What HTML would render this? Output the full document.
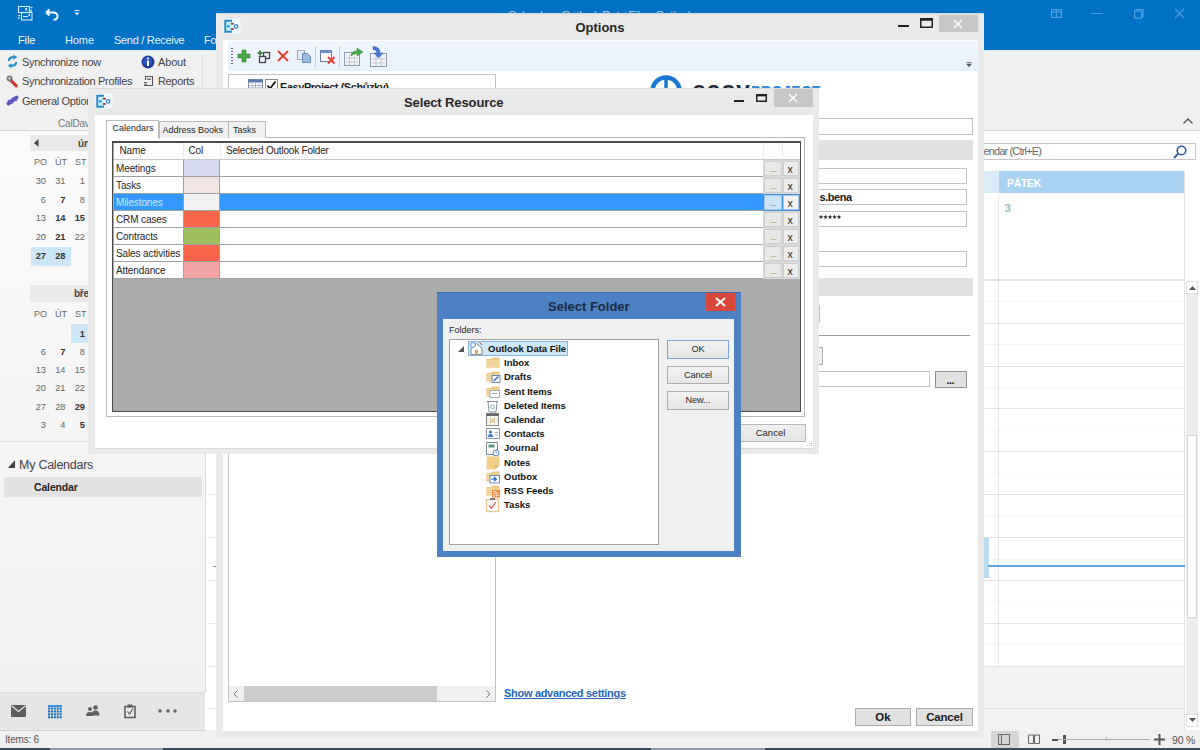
<!DOCTYPE html>
<html><head><meta charset="utf-8">
<style>
*{box-sizing:border-box;margin:0;padding:0}
html,body{width:1200px;height:750px;overflow:hidden;background:#fff;font-family:"Liberation Sans",sans-serif;color:#262626}
.a{position:absolute}
.t{position:absolute;white-space:nowrap;line-height:1}
svg{overflow:visible}
</style></head><body>
<div class="a" style="left:0px;top:0px;width:1200px;height:50px;background:#0072c6"></div>
<svg class="a" style="left:18px;top:6px;" width="15" height="15" viewBox="0 0 15 15"><g fill="none" stroke="#d8ecfa" stroke-width="1.1"><rect x="0.5" y="0.5" width="11" height="6"/><rect x="3.5" y="6.5" width="10.5" height="7.5"/><line x1="5" y1="10.5" x2="10" y2="10.5"/></g><rect x="7.5" y="2" width="1.6" height="2.5" fill="#e8f4fc"/><rect x="12.5" y="1" width="2" height="1.2" fill="#d8ecfa"/><rect x="12.5" y="3.5" width="1.2" height="2.5" fill="#d8ecfa"/><rect x="10.5" y="8" width="1.5" height="2" fill="#e8f4fc"/><rect x="0" y="9" width="2" height="1.2" fill="#d8ecfa"/><rect x="0" y="11.5" width="1.5" height="1.5" fill="#d8ecfa"/></svg>
<svg class="a" style="left:45px;top:8px;" width="14" height="13" viewBox="0 0 14 13"><path d="M1 4.5 L4.5 1.5 M1 4.5 L4.5 7.5 M1 4.5 H8 Q12.5 4.5 12.5 8.2 Q12.5 11.5 8.5 11.8" fill="none" stroke="#f4f8fc" stroke-width="2"/></svg>
<svg class="a" style="left:74px;top:10px;" width="6" height="6" viewBox="0 0 6 6"><rect x="0.5" y="0" width="5" height="1" fill="#d6e7f6"/><path d="M0.5 2.5 H5.5 L3 5.5 Z" fill="#d6e7f6"/></svg>
<div class="t" style="left:18px;top:34.89px;font-size:11px;font-weight:400;color:#ffffff;letter-spacing:-0.1px;">File</div>
<div class="t" style="left:65px;top:34.89px;font-size:11px;font-weight:400;color:#e8f1fa;letter-spacing:-0.1px;">Home</div>
<div class="t" style="left:114px;top:34.89px;font-size:11px;font-weight:400;color:#e8f1fa;letter-spacing:-0.3px;">Send / Receive</div>
<div class="t" style="left:204px;top:34.89px;font-size:11px;font-weight:400;color:#e8f1fa;letter-spacing:-0.1px;">Fo</div>
<div class="t" style="left:508px;top:9.69px;font-size:11px;font-weight:400;color:#b9d5ee;letter-spacing:-0.05px;">Calendar - Outlook Data File - Outlook</div>
<svg class="a" style="left:1051px;top:9px;" width="11" height="9" viewBox="0 0 11 9"><g fill="none" stroke="#4a9ee4" stroke-width="1.2"><rect x="0.6" y="0.6" width="9.8" height="7.8"/><line x1="5.5" y1="1" x2="5.5" y2="8"/><line x1="1" y1="3" x2="10" y2="3"/></g></svg>
<div class="a" style="left:1091px;top:13px;width:12px;height:1px;background:#4a9ee4"></div>
<svg class="a" style="left:1134px;top:9px;" width="10" height="10" viewBox="0 0 10 10"><g fill="none" stroke="#4a9ee4" stroke-width="1.2"><rect x="0.6" y="2.1" width="7" height="7"/><path d="M2.1 2.1 V0.6 H9.1 V7.6 H7.6"/></g></svg>
<svg class="a" style="left:1175px;top:9px;" width="9" height="9" viewBox="0 0 9 9"><g stroke="#4a9ee4" stroke-width="1.1"><line x1="0" y1="0" x2="9" y2="9"/><line x1="9" y1="0" x2="0" y2="9"/></g></svg>
<div class="a" style="left:0px;top:50px;width:1200px;height:81px;background:#f0f0f0"></div>
<div class="a" style="left:0px;top:50px;width:1200px;height:1px;background:#dcecf8"></div>
<div class="a" style="left:0px;top:130px;width:1200px;height:1px;background:#d5d5d5"></div>
<div class="a" style="left:202px;top:54px;width:1px;height:72px;background:#dadada"></div>
<svg class="a" style="left:7px;top:55px;" width="11" height="13" viewBox="0 0 11 13"><path d="M1.8 6 Q2 2.2 6.8 2.2" fill="none" stroke="#2a92c8" stroke-width="2.3"/><path d="M6.3 -0.3 L10.3 2.2 L6.3 4.8 Z" fill="#2a92c8"/><path d="M9.2 7 Q9 10.8 4.2 10.8" fill="none" stroke="#2a92c8" stroke-width="2.3"/><path d="M4.7 8.2 L0.7 10.8 L4.7 13.3 Z" fill="#2a92c8"/></svg>
<div class="t" style="left:22px;top:57.19px;font-size:11px;font-weight:400;color:#444;letter-spacing:-0.33px;">Synchronize now</div>
<svg class="a" style="left:6px;top:75px;" width="12" height="13" viewBox="0 0 12 13"><line x1="4.5" y1="5" x2="10.3" y2="10.8" stroke="#c8403a" stroke-width="3.2" stroke-linecap="round"/><circle cx="3.6" cy="3.6" r="3" fill="#7a7a7a"/><circle cx="3.4" cy="3.4" r="1.1" fill="#e8e8e8"/></svg>
<div class="t" style="left:22px;top:76.49px;font-size:11px;font-weight:400;color:#444;letter-spacing:-0.33px;">Synchronization Profiles</div>
<svg class="a" style="left:6px;top:95px;" width="13" height="11" viewBox="0 0 13 11"><line x1="2.5" y1="8.5" x2="10.5" y2="2.5" stroke="#5a50c0" stroke-width="4" stroke-linecap="round"/><circle cx="3" cy="6" r="1.3" fill="#6a60d0"/><circle cx="6" cy="7.5" r="1.3" fill="#6a60d0"/><circle cx="7" cy="3.5" r="1.3" fill="#6a60d0"/><circle cx="10" cy="5" r="1.3" fill="#6a60d0"/></svg>
<div class="t" style="left:22px;top:95.59px;font-size:11px;font-weight:400;color:#444;letter-spacing:-0.33px;">General Options</div>
<svg class="a" style="left:141px;top:55px;" width="14" height="14" viewBox="0 0 14 14"><circle cx="7" cy="7" r="6.5" fill="#1e3c9c"/><circle cx="6.5" cy="6" r="4.5" fill="#2c52c0"/><rect x="6" y="5.5" width="2" height="5.5" fill="#fff"/><circle cx="7" cy="3.5" r="1.1" fill="#fff"/></svg>
<div class="t" style="left:158px;top:57.19px;font-size:11px;font-weight:400;color:#444;letter-spacing:-0.15px;">About</div>
<svg class="a" style="left:144px;top:76px;" width="10" height="11" viewBox="0 0 10 11"><path d="M1.5 4 V0.5 H8.5 V9.5 H3" fill="none" stroke="#555" stroke-width="1.1"/><rect x="3" y="2.5" width="4" height="1.3" fill="#555"/><rect x="0" y="6" width="3" height="1.2" fill="#555"/><rect x="0" y="8.3" width="3" height="1.6" fill="#555"/></svg>
<div class="t" style="left:158px;top:76.49px;font-size:11px;font-weight:400;color:#444;letter-spacing:-0.35px;">Reports</div>
<div class="t" style="left:58px;top:118.53px;font-size:10px;font-weight:400;color:#777;letter-spacing:-0.2px;">CalDav</div>
<div class="a" style="left:0px;top:131px;width:205px;height:561px;background:linear-gradient(#fbfbfb,#f6f6f6 40%,#f0f0f0)"></div>
<div class="a" style="left:205px;top:131px;width:11px;height:599px;background:#ffffff"></div>
<div class="a" style="left:205px;top:131px;width:1px;height:561px;background:#dddddd"></div>
<div class="a" style="left:209px;top:280px;width:7px;height:1px;background:#e6e6e6"></div>
<div class="a" style="left:209px;top:323px;width:7px;height:1px;background:#e6e6e6"></div>
<div class="a" style="left:209px;top:366px;width:7px;height:1px;background:#e6e6e6"></div>
<div class="a" style="left:209px;top:408px;width:7px;height:1px;background:#e6e6e6"></div>
<div class="a" style="left:209px;top:451px;width:7px;height:1px;background:#e6e6e6"></div>
<div class="a" style="left:209px;top:494px;width:7px;height:1px;background:#e6e6e6"></div>
<div class="a" style="left:209px;top:537px;width:7px;height:1px;background:#e6e6e6"></div>
<div class="a" style="left:209px;top:580px;width:7px;height:1px;background:#e6e6e6"></div>
<div class="a" style="left:209px;top:623px;width:7px;height:1px;background:#e6e6e6"></div>
<div class="a" style="left:209px;top:666px;width:7px;height:1px;background:#e6e6e6"></div>
<div class="a" style="left:209px;top:708px;width:7px;height:1px;background:#e6e6e6"></div>
<div class="a" style="left:213px;top:566px;width:3px;height:1px;background:#5a9bd8"></div>
<div class="a" style="left:30px;top:135px;width:58px;height:16px;background:#e9e9e9"></div>
<svg class="a" style="left:34px;top:139px;" width="5" height="8" viewBox="0 0 5 8"><path d="M4.5 0 V8 L0 4 Z" fill="#444"/></svg>
<div class="t" style="left:78px;top:138.53px;font-size:10px;font-weight:700;color:#444;letter-spacing:-0.2px;">ún</div>
<div class="t" style="left:34px;top:158.38px;font-size:9px;font-weight:400;color:#666;letter-spacing:-0.1px;">PO</div>
<div class="t" style="left:55px;top:158.38px;font-size:9px;font-weight:400;color:#666;letter-spacing:-0.1px;">ÚT</div>
<div class="t" style="left:75px;top:158.38px;font-size:9px;font-weight:400;color:#666;letter-spacing:-0.1px;">ST</div>
<div class="a" style="left:31px;top:247px;width:40px;height:19px;background:#cde6f7"></div>
<div class="t" style="right:1154px;top:177.33px;font-size:9.3px;font-weight:400;color:#666;letter-spacing:0px;text-align:right;">30</div>
<div class="t" style="right:1134.5px;top:177.33px;font-size:9.3px;font-weight:400;color:#666;letter-spacing:0px;text-align:right;">31</div>
<div class="t" style="right:1115px;top:177.33px;font-size:9.3px;font-weight:400;color:#666;letter-spacing:0px;text-align:right;">1</div>
<div class="t" style="right:1154px;top:195.73px;font-size:9.3px;font-weight:400;color:#666;letter-spacing:0px;text-align:right;">6</div>
<div class="t" style="right:1134.5px;top:195.73px;font-size:9.3px;font-weight:700;color:#333;letter-spacing:0px;text-align:right;">7</div>
<div class="t" style="right:1115px;top:195.73px;font-size:9.3px;font-weight:400;color:#666;letter-spacing:0px;text-align:right;">8</div>
<div class="t" style="right:1154px;top:214.13px;font-size:9.3px;font-weight:400;color:#666;letter-spacing:0px;text-align:right;">13</div>
<div class="t" style="right:1134.5px;top:214.13px;font-size:9.3px;font-weight:700;color:#333;letter-spacing:0px;text-align:right;">14</div>
<div class="t" style="right:1115px;top:214.13px;font-size:9.3px;font-weight:700;color:#333;letter-spacing:0px;text-align:right;">15</div>
<div class="t" style="right:1154px;top:232.53px;font-size:9.3px;font-weight:400;color:#666;letter-spacing:0px;text-align:right;">20</div>
<div class="t" style="right:1134.5px;top:232.53px;font-size:9.3px;font-weight:700;color:#333;letter-spacing:0px;text-align:right;">21</div>
<div class="t" style="right:1115px;top:232.53px;font-size:9.3px;font-weight:400;color:#666;letter-spacing:0px;text-align:right;">22</div>
<div class="t" style="right:1154px;top:251.73px;font-size:9.3px;font-weight:700;color:#333;letter-spacing:0px;text-align:right;">27</div>
<div class="t" style="right:1134.5px;top:251.73px;font-size:9.3px;font-weight:700;color:#333;letter-spacing:0px;text-align:right;">28</div>
<div class="a" style="left:30px;top:285px;width:58px;height:17px;background:#e9e9e9"></div>
<div class="t" style="left:74px;top:289.04px;font-size:10px;font-weight:700;color:#444;letter-spacing:-0.3px;">bře</div>
<div class="t" style="left:34px;top:309.98px;font-size:9px;font-weight:400;color:#666;letter-spacing:-0.1px;">PO</div>
<div class="t" style="left:55px;top:309.98px;font-size:9px;font-weight:400;color:#666;letter-spacing:-0.1px;">ÚT</div>
<div class="t" style="left:75px;top:309.98px;font-size:9px;font-weight:400;color:#666;letter-spacing:-0.1px;">ST</div>
<div class="a" style="left:71px;top:324px;width:17px;height:19px;background:#cde6f7"></div>
<div class="t" style="right:1115px;top:329.53px;font-size:9.3px;font-weight:700;color:#333;letter-spacing:0px;text-align:right;">1</div>
<div class="t" style="right:1154px;top:347.63px;font-size:9.3px;font-weight:400;color:#666;letter-spacing:0px;text-align:right;">6</div>
<div class="t" style="right:1134.5px;top:347.63px;font-size:9.3px;font-weight:700;color:#333;letter-spacing:0px;text-align:right;">7</div>
<div class="t" style="right:1115px;top:347.63px;font-size:9.3px;font-weight:400;color:#666;letter-spacing:0px;text-align:right;">8</div>
<div class="t" style="right:1154px;top:365.73px;font-size:9.3px;font-weight:400;color:#666;letter-spacing:0px;text-align:right;">13</div>
<div class="t" style="right:1134.5px;top:365.73px;font-size:9.3px;font-weight:400;color:#666;letter-spacing:0px;text-align:right;">14</div>
<div class="t" style="right:1115px;top:365.73px;font-size:9.3px;font-weight:400;color:#666;letter-spacing:0px;text-align:right;">15</div>
<div class="t" style="right:1154px;top:384.13px;font-size:9.3px;font-weight:400;color:#666;letter-spacing:0px;text-align:right;">20</div>
<div class="t" style="right:1134.5px;top:384.13px;font-size:9.3px;font-weight:400;color:#666;letter-spacing:0px;text-align:right;">21</div>
<div class="t" style="right:1115px;top:384.13px;font-size:9.3px;font-weight:400;color:#666;letter-spacing:0px;text-align:right;">22</div>
<div class="t" style="right:1154px;top:403.13px;font-size:9.3px;font-weight:400;color:#666;letter-spacing:0px;text-align:right;">27</div>
<div class="t" style="right:1134.5px;top:403.13px;font-size:9.3px;font-weight:400;color:#666;letter-spacing:0px;text-align:right;">28</div>
<div class="t" style="right:1115px;top:403.13px;font-size:9.3px;font-weight:700;color:#333;letter-spacing:0px;text-align:right;">29</div>
<div class="t" style="right:1154px;top:421.33px;font-size:9.3px;font-weight:400;color:#666;letter-spacing:0px;text-align:right;">3</div>
<div class="t" style="right:1134.5px;top:421.33px;font-size:9.3px;font-weight:400;color:#666;letter-spacing:0px;text-align:right;">4</div>
<div class="t" style="right:1115px;top:421.33px;font-size:9.3px;font-weight:700;color:#333;letter-spacing:0px;text-align:right;">5</div>
<div class="a" style="left:0px;top:441px;width:88px;height:1px;background:#dcdcdc"></div>
<svg class="a" style="left:8px;top:460px;" width="7" height="8" viewBox="0 0 7 8"><path d="M7 0 V8 H0 Z" fill="#444"/></svg>
<div class="t" style="left:19px;top:459.42px;font-size:12.5px;font-weight:400;color:#444;letter-spacing:-0.25px;">My Calendars</div>
<div class="a" style="left:4px;top:477px;width:198px;height:20px;background:#e2e2e2"></div>
<div class="t" style="left:34px;top:482.11px;font-size:10.5px;font-weight:700;color:#262626;letter-spacing:-0.15px;">Calendar</div>
<div class="a" style="left:0px;top:692px;width:205px;height:38px;background:#e6e6e6"></div>
<div class="a" style="left:0px;top:692px;width:205px;height:1px;background:#dadada"></div>
<svg class="a" style="left:11px;top:705px;" width="15" height="12" viewBox="0 0 15 12"><rect x="0" y="0" width="15" height="12" fill="#5f5f5f"/><path d="M0.5 0.8 L7.5 6.5 L14.5 0.8" fill="none" stroke="#e6e6e6" stroke-width="1.3"/></svg>
<svg class="a" style="left:48px;top:705px;" width="15" height="14" viewBox="0 0 15 14"><rect x="0" y="0" width="14" height="2" fill="#3a8ee0"/><rect x="0.0" y="2.5" width="2.1" height="2.1" fill="#1f6bb8"/><rect x="2.9" y="2.5" width="2.1" height="2.1" fill="#1f6bb8"/><rect x="5.8" y="2.5" width="2.1" height="2.1" fill="#1f6bb8"/><rect x="8.7" y="2.5" width="2.1" height="2.1" fill="#1f6bb8"/><rect x="11.6" y="2.5" width="2.1" height="2.1" fill="#1f6bb8"/><rect x="0.0" y="5.4" width="2.1" height="2.1" fill="#1f6bb8"/><rect x="2.9" y="5.4" width="2.1" height="2.1" fill="#1f6bb8"/><rect x="5.8" y="5.4" width="2.1" height="2.1" fill="#1f6bb8"/><rect x="8.7" y="5.4" width="2.1" height="2.1" fill="#1f6bb8"/><rect x="11.6" y="5.4" width="2.1" height="2.1" fill="#1f6bb8"/><rect x="0.0" y="8.3" width="2.1" height="2.1" fill="#1f6bb8"/><rect x="2.9" y="8.3" width="2.1" height="2.1" fill="#1f6bb8"/><rect x="5.8" y="8.3" width="2.1" height="2.1" fill="#1f6bb8"/><rect x="8.7" y="8.3" width="2.1" height="2.1" fill="#1f6bb8"/><rect x="11.6" y="8.3" width="2.1" height="2.1" fill="#1f6bb8"/><rect x="0.0" y="11.2" width="2.1" height="2.1" fill="#1f6bb8"/><rect x="2.9" y="11.2" width="2.1" height="2.1" fill="#1f6bb8"/><rect x="5.8" y="11.2" width="2.1" height="2.1" fill="#1f6bb8"/><rect x="8.7" y="11.2" width="2.1" height="2.1" fill="#1f6bb8"/><rect x="11.6" y="11.2" width="2.1" height="2.1" fill="#1f6bb8"/></svg>
<svg class="a" style="left:86px;top:705px;" width="14" height="11" viewBox="0 0 14 11"><circle cx="9.5" cy="2.5" r="2.3" fill="#5f5f5f"/><path d="M5.5 10.5 Q5.5 5.5 9.5 5.5 Q13.5 5.5 13.5 10.5 Z" fill="#5f5f5f"/><circle cx="4" cy="4" r="2" fill="#5f5f5f"/><path d="M0 11 Q0 7 4 7 Q7 7 7 11 Z" fill="#5f5f5f"/></svg>
<svg class="a" style="left:124px;top:704px;" width="12" height="14" viewBox="0 0 12 14"><path d="M1 2.5 H11 V13.5 H1 Z" fill="none" stroke="#5f5f5f" stroke-width="1.6"/><rect x="3.5" y="0.5" width="5" height="3" fill="#5f5f5f"/><path d="M3.5 7.5 L5.5 10 L9 4.5" fill="none" stroke="#5f5f5f" stroke-width="1.2"/></svg>
<svg class="a" style="left:158px;top:709px;" width="4" height="4" viewBox="0 0 4 4"><circle cx="2" cy="2" r="1.8" fill="#666"/></svg>
<svg class="a" style="left:165.5px;top:709px;" width="4" height="4" viewBox="0 0 4 4"><circle cx="2" cy="2" r="1.8" fill="#666"/></svg>
<svg class="a" style="left:173px;top:709px;" width="4" height="4" viewBox="0 0 4 4"><circle cx="2" cy="2" r="1.8" fill="#666"/></svg>
<div class="a" style="left:0px;top:730px;width:1200px;height:18px;background:#f0f0f0"></div>
<div class="a" style="left:0px;top:730px;width:205px;height:1px;background:#d0d0d0"></div>
<div class="t" style="left:5px;top:734.53px;font-size:10px;font-weight:400;color:#555;letter-spacing:-0.2px;">Items: 6</div>
<div class="a" style="left:0px;top:748px;width:1200px;height:2px;background:#3c4b5f"></div>
<div class="a" style="left:50px;top:748px;width:113px;height:2px;background:#8f9aa8"></div>
<div class="a" style="left:651px;top:748px;width:114px;height:2px;background:#8f9aa8"></div>
<svg class="a" style="left:1183px;top:118px;" width="10" height="6" viewBox="0 0 10 6"><path d="M0.5 5.5 L5 1 L9.5 5.5" fill="none" stroke="#555" stroke-width="1.3"/></svg>
<div class="a" style="left:900px;top:143px;width:296px;height:17px;background:#fff;border:1px solid #c6c6c6"></div>
<div class="t" style="right:159px;top:146.16px;font-size:10.8px;font-weight:400;color:#666;letter-spacing:-0.75px;text-align:right;">Search Calendar (Ctrl+E)</div>
<svg class="a" style="left:1173px;top:145px;" width="14" height="14" viewBox="0 0 14 14"><circle cx="8.5" cy="5.5" r="4.3" fill="none" stroke="#2b5797" stroke-width="1.6"/><line x1="5.3" y1="8.7" x2="1" y2="13" stroke="#2b5797" stroke-width="1.8"/></svg>
<div class="a" style="left:983px;top:171px;width:16px;height:22px;background:#dcedfa"></div>
<div class="a" style="left:999px;top:171px;width:186px;height:22px;background:#a9d1f2"></div>
<div class="t" style="left:1007px;top:178.11px;font-size:10.5px;font-weight:700;color:#ffffff;letter-spacing:-0.3px;">PÁTEK</div>
<div class="t" style="left:1004.5px;top:203.07px;font-size:11.5px;font-weight:700;color:#9db8ca;letter-spacing:0px;">3</div>
<div class="a" style="left:998px;top:193px;width:1px;height:537px;background:#e8e8e8"></div>
<div class="a" style="left:1184px;top:171px;width:1px;height:559px;background:#e3e3e3"></div>
<div class="a" style="left:983px;top:666px;width:201px;height:64px;background:#f2f2f2"></div>
<div class="a" style="left:983px;top:279px;width:201px;height:2px;background:#e1e1e1"></div>
<div class="a" style="left:983px;top:323px;width:201px;height:1px;background:#e1e1e1"></div>
<div class="a" style="left:983px;top:366px;width:201px;height:1px;background:#e1e1e1"></div>
<div class="a" style="left:983px;top:408px;width:201px;height:1px;background:#e1e1e1"></div>
<div class="a" style="left:983px;top:451px;width:201px;height:1px;background:#e1e1e1"></div>
<div class="a" style="left:983px;top:494px;width:201px;height:1px;background:#e1e1e1"></div>
<div class="a" style="left:983px;top:537px;width:201px;height:1px;background:#e1e1e1"></div>
<div class="a" style="left:983px;top:580px;width:201px;height:1px;background:#e1e1e1"></div>
<div class="a" style="left:983px;top:623px;width:201px;height:1px;background:#e1e1e1"></div>
<div class="a" style="left:983px;top:666px;width:201px;height:1px;background:#e1e1e1"></div>
<div class="a" style="left:983px;top:708px;width:201px;height:1px;background:#e1e1e1"></div>
<div class="a" style="left:983px;top:301px;width:201px;height:1px;background:repeating-linear-gradient(90deg,#ececec 0 1px,transparent 1px 2px)"></div>
<div class="a" style="left:983px;top:344px;width:201px;height:1px;background:repeating-linear-gradient(90deg,#ececec 0 1px,transparent 1px 2px)"></div>
<div class="a" style="left:983px;top:387px;width:201px;height:1px;background:repeating-linear-gradient(90deg,#ececec 0 1px,transparent 1px 2px)"></div>
<div class="a" style="left:983px;top:430px;width:201px;height:1px;background:repeating-linear-gradient(90deg,#ececec 0 1px,transparent 1px 2px)"></div>
<div class="a" style="left:983px;top:473px;width:201px;height:1px;background:repeating-linear-gradient(90deg,#ececec 0 1px,transparent 1px 2px)"></div>
<div class="a" style="left:983px;top:516px;width:201px;height:1px;background:repeating-linear-gradient(90deg,#ececec 0 1px,transparent 1px 2px)"></div>
<div class="a" style="left:983px;top:559px;width:201px;height:1px;background:repeating-linear-gradient(90deg,#ececec 0 1px,transparent 1px 2px)"></div>
<div class="a" style="left:983px;top:601px;width:201px;height:1px;background:repeating-linear-gradient(90deg,#ececec 0 1px,transparent 1px 2px)"></div>
<div class="a" style="left:983px;top:644px;width:201px;height:1px;background:repeating-linear-gradient(90deg,#ececec 0 1px,transparent 1px 2px)"></div>
<div class="a" style="left:983px;top:687px;width:201px;height:1px;background:repeating-linear-gradient(90deg,#ececec 0 1px,transparent 1px 2px)"></div>
<div class="a" style="left:984px;top:538px;width:5px;height:40px;background:#bcdcf4"></div>
<div class="a" style="left:988px;top:565px;width:197px;height:2px;background:#62a6dc"></div>
<div class="a" style="left:1186px;top:281px;width:12px;height:446px;background:#ececec"></div>
<div class="a" style="left:1186px;top:281px;width:12px;height:13px;background:#fff;border:1px solid #dedede"></div>
<svg class="a" style="left:1189px;top:286px;" width="7" height="4" viewBox="0 0 7 4"><path d="M0 4 L3.5 0 L7 4 Z" fill="#555"/></svg>
<div class="a" style="left:1187px;top:435px;width:10px;height:183px;background:#fff;border:1px solid #d6d6d6"></div>
<div class="a" style="left:1186px;top:714px;width:12px;height:13px;background:#fff;border:1px solid #dedede"></div>
<svg class="a" style="left:1189px;top:718px;" width="7" height="4" viewBox="0 0 7 4"><path d="M0 0 L3.5 4 L7 0 Z" fill="#555"/></svg>
<div class="a" style="left:991px;top:731px;width:28px;height:17px;background:#d6d6d6"></div>
<svg class="a" style="left:998px;top:734px;" width="12" height="11" viewBox="0 0 12 11"><rect x="0.5" y="0.5" width="11" height="10" fill="none" stroke="#666" stroke-width="1"/><line x1="3.5" y1="0.5" x2="3.5" y2="10.5" stroke="#666"/></svg>
<svg class="a" style="left:1028px;top:734px;" width="12" height="10" viewBox="0 0 12 10"><path d="M0.5 1 H5.5 V9.5 H0.5 Z M6.5 1 H11.5 V9.5 H6.5 Z" fill="none" stroke="#666" stroke-width="1"/></svg>
<div class="a" style="left:1052px;top:739px;width:6px;height:2px;background:#555"></div>
<div class="a" style="left:1063px;top:735px;width:3px;height:9px;background:#555"></div>
<div class="a" style="left:1058px;top:739px;width:92px;height:1px;background:#aaa"></div>
<div class="a" style="left:1106px;top:737px;width:1px;height:4px;background:#bbb"></div>
<svg class="a" style="left:1154px;top:734px;" width="11" height="11" viewBox="0 0 11 11"><rect x="0" y="4.5" width="11" height="2" fill="#555"/><rect x="4.5" y="0" width="2" height="11" fill="#555"/></svg>
<div class="t" style="left:1172px;top:735.11px;font-size:10.5px;font-weight:400;color:#555;letter-spacing:-0.2px;">90 %</div>
<div class="a" style="left:216px;top:14px;width:768px;height:723px;background:#e9e9e9"></div>
<div class="a" style="left:216px;top:13px;width:768px;height:1px;background:#cfdbe8"></div>
<div class="a" style="left:216px;top:14px;width:768px;height:1px;background:#e4e4e4"></div>
<div class="a" style="left:223px;top:40px;width:755px;height:691px;background:#ffffff"></div>
<svg class="a" style="left:224px;top:19px;" width="16" height="15" viewBox="0 0 16 15"><rect x="-0.5" y="-0.5" width="17" height="15" fill="#eef8fc"/><rect x="1.5" y="2" width="6" height="10" fill="#c6f0fb"/><path d="M0.3 0.8 H8 V2.8 H2.2 V11.7 H8 V13.7 H0.3 Z" fill="#2a8ac6"/><circle cx="4.3" cy="7.3" r="1.5" fill="#2fa6e0"/><ellipse cx="8.3" cy="4.7" rx="1.7" ry="1" fill="#8a3a52"/><ellipse cx="8.3" cy="10" rx="1.7" ry="1" fill="#8a3a52"/><circle cx="12.2" cy="7.4" r="1.7" fill="none" stroke="#3a8ac6" stroke-width="1.3"/></svg>
<div class="t" style="left:400px;width:400px;text-align:center;top:20.80px;font-size:13px;font-weight:700;color:#262626;letter-spacing:0px;">Options</div>
<div class="a" style="left:898px;top:25px;width:11px;height:2px;background:#222"></div>
<svg class="a" style="left:920px;top:18px;" width="13" height="10" viewBox="0 0 13 10"><rect x="0.75" y="0.75" width="11.5" height="8.5" fill="none" stroke="#222" stroke-width="1.5"/><rect x="0.75" y="0.75" width="11.5" height="2" fill="#222"/></svg>
<div class="a" style="left:939px;top:15px;width:39px;height:17px;background:#c7c7c7"></div>
<svg class="a" style="left:953px;top:19px;" width="10" height="10" viewBox="0 0 10 10"><g stroke="#fff" stroke-width="1.5"><line x1="1" y1="1" x2="9" y2="9"/><line x1="9" y1="1" x2="1" y2="9"/></g></svg>
<div class="a" style="left:228px;top:41px;width:750px;height:30px;background:linear-gradient(#f0f6fd,#e8f0fa)"></div>
<div class="a" style="left:231px;top:47.5px;width:2px;height:1.5px;background:#666"></div>
<div class="a" style="left:231px;top:50.5px;width:2px;height:1.5px;background:#666"></div>
<div class="a" style="left:231px;top:53.5px;width:2px;height:1.5px;background:#666"></div>
<div class="a" style="left:231px;top:56.5px;width:2px;height:1.5px;background:#666"></div>
<div class="a" style="left:231px;top:59.5px;width:2px;height:1.5px;background:#666"></div>
<div class="a" style="left:231px;top:62.5px;width:2px;height:1.5px;background:#666"></div>
<svg class="a" style="left:238px;top:50px;" width="12" height="12" viewBox="0 0 12 12"><path d="M4 0 H8 V4 H12 V8 H8 V12 H4 V8 H0 V4 H4 Z" fill="#4aa84a" stroke="#2f7f2f" stroke-width="0.6"/></svg>
<svg class="a" style="left:257px;top:50px;" width="14" height="14" viewBox="0 0 14 14"><path d="M2 0.5 H4 V2 H5.5 V4 H4 V5.5 H2 V4 H0.5 V2 H2 Z" fill="#3d8a3d"/><rect x="6.5" y="2.5" width="6" height="6" fill="none" stroke="#444" stroke-width="1.3"/><rect x="2.5" y="6.5" width="6" height="6" fill="#f4f7fb" stroke="#444" stroke-width="1.3"/></svg>
<svg class="a" style="left:277px;top:50px;" width="12" height="12" viewBox="0 0 12 12"><g stroke="#e8402a" stroke-width="2"><line x1="1" y1="1" x2="11" y2="11"/><line x1="11" y1="1" x2="1" y2="11"/></g></svg>
<svg class="a" style="left:297px;top:50px;" width="14" height="13" viewBox="0 0 14 13"><rect x="0.5" y="0.5" width="7" height="9" fill="#e3ebf6" stroke="#9aaabe"/><path d="M5.5 3.5 H10.5 L13.5 6.5 V12.5 H5.5 Z" fill="#9db8e6" stroke="#5a78a8" stroke-width="0.8"/></svg>
<div class="a" style="left:315px;top:46px;width:1px;height:21px;background:#c6ccd6"></div>
<svg class="a" style="left:320px;top:50px;" width="16" height="14" viewBox="0 0 16 14"><rect x="0.5" y="0.5" width="11" height="11" fill="#fff" stroke="#6a7ea0"/><rect x="0.5" y="0.5" width="11" height="2.5" fill="#6a8ed0"/><g stroke="#e23a2a" stroke-width="1.8"><line x1="8" y1="7" x2="14.5" y2="13.5"/><line x1="14.5" y1="7" x2="8" y2="13.5"/></g></svg>
<div class="a" style="left:339px;top:46px;width:1px;height:21px;background:#c6ccd6"></div>
<svg class="a" style="left:344px;top:47px;" width="20" height="20" viewBox="0 0 20 20"><rect x="0.5" y="5.5" width="15" height="13" fill="#f2f4f7" stroke="#8d9aab"/><g stroke="#c3cad4"><line x1="2" y1="11" x2="14" y2="11"/><line x1="2" y1="15" x2="14" y2="15"/><line x1="5.5" y1="8" x2="5.5" y2="18"/><line x1="10.5" y1="8" x2="10.5" y2="18"/></g><path d="M7 9 Q7 4 13 4 V1 L19 5 L13 9 V6.5 Q9.5 6.5 7 9 Z" fill="#4caf50" stroke="#2e7d32" stroke-width="0.5"/></svg>
<svg class="a" style="left:370px;top:46px;" width="18" height="21" viewBox="0 0 18 21"><rect x="0.5" y="7.5" width="16" height="13" fill="#f2f4f7" stroke="#8d9aab"/><g stroke="#c3cad4"><line x1="2" y1="13" x2="15" y2="13"/><line x1="2" y1="17" x2="15" y2="17"/><line x1="6" y1="10" x2="6" y2="20"/><line x1="11" y1="10" x2="11" y2="20"/></g><path d="M3 0.5 Q10 0.5 10 7 H13 L8.5 12 L4 7 H7 Q7 3.5 3 3.5 Z" fill="#4a78d0" stroke="#2a58b0" stroke-width="0.5"/></svg>
<svg class="a" style="left:966px;top:62px;" width="6" height="5" viewBox="0 0 6 5"><rect x="0.5" y="0" width="5" height="0.8" fill="#666"/><path d="M0 1.8 H6 L3 5 Z" fill="#555"/></svg>
<div class="a" style="left:228px;top:74px;width:268px;height:628px;background:#fff;border:1px solid #c2c2c2"></div>
<svg class="a" style="left:248px;top:79px;" width="14" height="12" viewBox="0 0 14 12"><rect x="0.5" y="0.5" width="14" height="11" fill="#fff" stroke="#7e8ca0"/><rect x="0.5" y="0.5" width="14" height="3" fill="#5a7ab8"/><g stroke="#9aa8c0" stroke-width="0.8"><line x1="1" y1="6.5" x2="14" y2="6.5"/><line x1="1" y1="9" x2="14" y2="9"/><line x1="4" y1="4" x2="4" y2="11"/><line x1="7.5" y1="4" x2="7.5" y2="11"/><line x1="11" y1="4" x2="11" y2="11"/></g><rect x="11" y="9" width="3.5" height="2.5" fill="#e05030"/></svg>
<svg class="a" style="left:265px;top:79px;" width="13" height="13" viewBox="0 0 13 13"><rect x="0.5" y="0.5" width="12" height="12" fill="#fff" stroke="#8a8a8a"/><path d="M2.5 6.5 L5 9.5 L10.5 2.5" fill="none" stroke="#111" stroke-width="1.8"/></svg>
<div class="t" style="left:280px;top:81.69px;font-size:11px;font-weight:700;color:#1a1a1a;letter-spacing:-0.45px;">EasyProject (Schůzky)</div>
<div class="a" style="left:229px;top:686px;width:266px;height:15px;background:#f0f0f0"></div>
<div class="a" style="left:244px;top:686px;width:193px;height:15px;background:#cdcdcd"></div>
<svg class="a" style="left:233px;top:690px;" width="5" height="8" viewBox="0 0 5 8"><path d="M4.5 0.5 L1 4 L4.5 7.5" fill="none" stroke="#777" stroke-width="1"/></svg>
<svg class="a" style="left:486px;top:690px;" width="5" height="8" viewBox="0 0 5 8"><path d="M0.5 0.5 L4 4 L0.5 7.5" fill="none" stroke="#777" stroke-width="1"/></svg>
<svg class="a" style="left:650px;top:75px;" width="34" height="20" viewBox="0 0 34 20"><circle cx="16" cy="16" r="13.5" fill="none" stroke="#1976d2" stroke-width="4.5"/><rect x="14.3" y="4" width="3.4" height="14" fill="#1976d2"/><rect x="6" y="13" width="20" height="3" fill="#1976d2"/></svg>
<div class="t" style="left:692px;top:77.84px;font-size:25px;font-weight:700;color:#1e2a3a;letter-spacing:0.8px;">easy</div>
<div class="t" style="left:751px;top:83.65px;font-size:14px;font-weight:700;color:#2a88dc;letter-spacing:0.55px;">PROJECT</div>
<div class="a" style="left:790px;top:118px;width:183px;height:17px;background:#fff;border:1px solid #bdbdbd"></div>
<div class="a" style="left:790px;top:140px;width:183px;height:20px;background:#e1e1e1"></div>
<div class="a" style="left:790px;top:168px;width:177px;height:16px;background:#fff;border:1px solid #c2c2c2"></div>
<div class="a" style="left:790px;top:189px;width:177px;height:16px;background:#fff;border:1px solid #c2c2c2"></div>
<div class="t" style="left:819.5px;top:191.89px;font-size:11px;font-weight:700;color:#1a1a1a;letter-spacing:-0.45px;">s.bena</div>
<div class="a" style="left:790px;top:211px;width:177px;height:16px;background:#fff;border:1px solid #c2c2c2"></div>
<svg class="a" style="left:818px;top:214px;" width="24" height="6" viewBox="0 0 24 6"><polygon points="3.00,0.60 3.63,2.13 5.28,2.26 4.03,3.33 4.41,4.94 3.00,4.08 1.59,4.94 1.97,3.33 0.72,2.26 2.37,2.13" fill="#2a2a2a"/><polygon points="7.50,0.60 8.13,2.13 9.78,2.26 8.53,3.33 8.91,4.94 7.50,4.08 6.09,4.94 6.47,3.33 5.22,2.26 6.87,2.13" fill="#2a2a2a"/><polygon points="12.00,0.60 12.63,2.13 14.28,2.26 13.03,3.33 13.41,4.94 12.00,4.08 10.59,4.94 10.97,3.33 9.72,2.26 11.37,2.13" fill="#2a2a2a"/><polygon points="16.50,0.60 17.13,2.13 18.78,2.26 17.53,3.33 17.91,4.94 16.50,4.08 15.09,4.94 15.47,3.33 14.22,2.26 15.87,2.13" fill="#2a2a2a"/><polygon points="21.00,0.60 21.63,2.13 23.28,2.26 22.03,3.33 22.41,4.94 21.00,4.08 19.59,4.94 19.97,3.33 18.72,2.26 20.37,2.13" fill="#2a2a2a"/></svg>
<div class="a" style="left:790px;top:251px;width:177px;height:16px;background:#fff;border:1px solid #c2c2c2"></div>
<div class="a" style="left:790px;top:278px;width:183px;height:18px;background:#e1e1e1"></div>
<div class="a" style="left:790px;top:305px;width:30px;height:18px;background:#fff;border:1px solid #c2c2c2"></div>
<div class="a" style="left:790px;top:335px;width:180px;height:1px;background:#9a9a9a"></div>
<div class="a" style="left:790px;top:347px;width:33px;height:18px;background:#f0f0f0;border:1px solid #adadad"></div>
<div class="a" style="left:790px;top:371px;width:140px;height:16px;background:#fff;border:1px solid #c2c2c2"></div>
<div class="a" style="left:935px;top:371px;width:32px;height:17px;background:#e1e1e1;border:1px solid #8f8f8f"></div>
<div class="t" style="left:946.5px;top:374.69px;font-size:11px;font-weight:700;color:#222;letter-spacing:-0.5px;">...</div>
<div class="t" style="left:504px;top:688.19px;font-size:11px;font-weight:700;color:#2566b8;letter-spacing:-0.3px;text-decoration:underline">Show advanced settings</div>
<div class="a" style="left:855px;top:708px;width:56px;height:18px;background:#e1e1e1;border:1px solid #adadad"></div>
<div class="t" style="left:683px;width:400px;text-align:center;top:711.77px;font-size:11.5px;font-weight:700;color:#1a1a1a;letter-spacing:0px;">Ok</div>
<div class="a" style="left:916px;top:708px;width:57px;height:18px;background:#e1e1e1;border:1px solid #adadad"></div>
<div class="t" style="left:744.5px;width:400px;text-align:center;top:711.77px;font-size:11.5px;font-weight:700;color:#1a1a1a;letter-spacing:-0.2px;">Cancel</div>
<div class="a" style="left:88px;top:88px;width:731px;height:366px;background:#e9e9e9"></div>
<div class="a" style="left:88px;top:88px;width:731px;height:1px;background:#dcdcdc"></div>
<div class="a" style="left:95px;top:115px;width:718px;height:333px;background:#ffffff"></div>
<div class="a" style="left:95px;top:448px;width:718px;height:1px;background:#dadada"></div>
<svg class="a" style="left:96px;top:94px;" width="16" height="15" viewBox="0 0 16 15"><rect x="-0.5" y="-0.5" width="17" height="15" fill="#eef8fc"/><rect x="1.5" y="2" width="6" height="10" fill="#c6f0fb"/><path d="M0.3 0.8 H8 V2.8 H2.2 V11.7 H8 V13.7 H0.3 Z" fill="#2a8ac6"/><circle cx="4.3" cy="7.3" r="1.5" fill="#2fa6e0"/><ellipse cx="8.3" cy="4.7" rx="1.7" ry="1" fill="#8a3a52"/><ellipse cx="8.3" cy="10" rx="1.7" ry="1" fill="#8a3a52"/><circle cx="12.2" cy="7.4" r="1.7" fill="none" stroke="#3a8ac6" stroke-width="1.3"/></svg>
<div class="t" style="left:404px;top:96.00px;font-size:13px;font-weight:700;color:#262626;letter-spacing:-0.12px;">Select Resource</div>
<div class="a" style="left:734px;top:100px;width:10px;height:2px;background:#222"></div>
<svg class="a" style="left:756px;top:94px;" width="11" height="8" viewBox="0 0 11 8"><rect x="0.75" y="0.75" width="9.5" height="6.5" fill="none" stroke="#222" stroke-width="1.5"/><rect x="0.75" y="0.75" width="9.5" height="1.6" fill="#222"/></svg>
<div class="a" style="left:774px;top:89px;width:39px;height:18px;background:#c7c7c7"></div>
<svg class="a" style="left:788px;top:93px;" width="10" height="10" viewBox="0 0 10 10"><g stroke="#fff" stroke-width="1.5"><line x1="1" y1="1" x2="9" y2="9"/><line x1="9" y1="1" x2="1" y2="9"/></g></svg>
<div class="a" style="left:106px;top:137px;width:699px;height:280px;background:#fff;border:1px solid #b9b9b9"></div>
<div class="a" style="left:159px;top:121px;width:70px;height:17px;background:#f0f0f0;border:1px solid #b9b9b9;border-bottom:none"></div>
<div class="a" style="left:228px;top:121px;width:38px;height:17px;background:#f0f0f0;border:1px solid #b9b9b9;border-bottom:none"></div>
<div class="a" style="left:106px;top:120px;width:53px;height:19px;background:#fff;border:1px solid #b9b9b9;border-bottom:none"></div>
<div class="t" style="left:112.5px;top:124.38px;font-size:9px;font-weight:400;color:#262626;letter-spacing:0px;">Calendars</div>
<div class="t" style="left:162.5px;top:125.68px;font-size:9px;font-weight:400;color:#262626;letter-spacing:0px;">Address Books</div>
<div class="t" style="left:233px;top:125.68px;font-size:9px;font-weight:400;color:#262626;letter-spacing:0px;">Tasks</div>
<div class="a" style="left:112px;top:141px;width:689px;height:271px;background:#ababab;border:1.5px solid #4a4a4a;border-top-width:2px"></div>
<div class="a" style="left:114px;top:143px;width:686px;height:16px;background:#fdfdfd"></div>
<div class="a" style="left:114px;top:159px;width:686px;height:1px;background:#c8c8c8"></div>
<div class="a" style="left:183px;top:143px;width:1px;height:15px;background:#e8e8e8"></div>
<div class="a" style="left:220px;top:143px;width:1px;height:15px;background:#e8e8e8"></div>
<div class="a" style="left:763px;top:143px;width:1px;height:15px;background:#e8e8e8"></div>
<div class="a" style="left:782px;top:143px;width:1px;height:15px;background:#e8e8e8"></div>
<div class="t" style="left:119.5px;top:145.73px;font-size:10px;font-weight:400;color:#262626;letter-spacing:-0.1px;">Name</div>
<div class="t" style="left:188.5px;top:145.73px;font-size:10px;font-weight:400;color:#262626;letter-spacing:-0.1px;">Col</div>
<div class="t" style="left:226px;top:145.73px;font-size:10px;font-weight:400;color:#262626;letter-spacing:-0.2px;">Selected Outlook Folder</div>
<div class="a" style="left:114px;top:160px;width:69px;height:16px;background:#ffffff"></div>
<div class="a" style="left:183px;top:160px;width:37px;height:16px;background:#d6daf4;border-left:1px solid #a0a0a0;border-right:1px solid #a0a0a0"></div>
<div class="a" style="left:220px;top:160px;width:543px;height:16px;background:#ffffff"></div>
<div class="a" style="left:114px;top:176px;width:649px;height:1px;background:#a0a0a0"></div>
<div class="a" style="left:763px;top:160px;width:37px;height:17px;background:#d8d8d8"></div>
<div class="a" style="left:764px;top:161px;width:18px;height:15px;background:#e8e8e8;border:1px solid #cfcfcf"></div>
<div class="a" style="left:783px;top:161px;width:16px;height:15px;background:#ededed;border:1px solid #cfcfcf"></div>
<div class="t" style="left:770px;top:165.73px;font-size:8px;font-weight:400;color:#555;letter-spacing:0px;">...</div>
<div class="t" style="left:787.5px;top:163.61px;font-size:10.5px;font-weight:400;color:#1a1a1a;letter-spacing:0px;">x</div>
<div class="t" style="left:116px;top:163.53px;font-size:10px;font-weight:400;color:#262626;letter-spacing:-0.12px;">Meetings</div>
<div class="a" style="left:114px;top:177px;width:69px;height:16px;background:#ffffff"></div>
<div class="a" style="left:183px;top:177px;width:37px;height:16px;background:#f2e4e2;border-left:1px solid #a0a0a0;border-right:1px solid #a0a0a0"></div>
<div class="a" style="left:220px;top:177px;width:543px;height:16px;background:#ffffff"></div>
<div class="a" style="left:114px;top:193px;width:649px;height:1px;background:#a0a0a0"></div>
<div class="a" style="left:763px;top:177px;width:37px;height:17px;background:#d8d8d8"></div>
<div class="a" style="left:764px;top:178px;width:18px;height:15px;background:#e8e8e8;border:1px solid #cfcfcf"></div>
<div class="a" style="left:783px;top:178px;width:16px;height:15px;background:#ededed;border:1px solid #cfcfcf"></div>
<div class="t" style="left:770px;top:182.73px;font-size:8px;font-weight:400;color:#555;letter-spacing:0px;">...</div>
<div class="t" style="left:787.5px;top:180.61px;font-size:10.5px;font-weight:400;color:#1a1a1a;letter-spacing:0px;">x</div>
<div class="t" style="left:116px;top:180.53px;font-size:10px;font-weight:400;color:#262626;letter-spacing:-0.12px;">Tasks</div>
<div class="a" style="left:114px;top:194px;width:69px;height:16px;background:#3399ff"></div>
<div class="a" style="left:183px;top:194px;width:37px;height:16px;background:#f2f2f2;border-left:1px solid #a0a0a0;border-right:1px solid #a0a0a0"></div>
<div class="a" style="left:220px;top:194px;width:543px;height:16px;background:#3399ff"></div>
<div class="a" style="left:114px;top:210px;width:649px;height:1px;background:#a0a0a0"></div>
<div class="a" style="left:763px;top:194px;width:37px;height:17px;background:#3d8ee0"></div>
<div class="a" style="left:764px;top:195px;width:18px;height:15px;background:#cce4f7;border:1px solid #a8c8e8"></div>
<div class="a" style="left:783px;top:195px;width:16px;height:15px;background:#f2f2f2;border:1px solid #a8c8e8"></div>
<div class="t" style="left:770px;top:199.73px;font-size:8px;font-weight:400;color:#555;letter-spacing:0px;">...</div>
<div class="t" style="left:787.5px;top:197.61px;font-size:10.5px;font-weight:400;color:#1a1a1a;letter-spacing:0px;">x</div>
<div class="t" style="left:116px;top:197.53px;font-size:10px;font-weight:400;color:#cfe6ff;letter-spacing:-0.12px;">Milestones</div>
<div class="a" style="left:114px;top:211px;width:69px;height:16px;background:#ffffff"></div>
<div class="a" style="left:183px;top:211px;width:37px;height:16px;background:#f7654a;border-left:1px solid #a0a0a0;border-right:1px solid #a0a0a0"></div>
<div class="a" style="left:220px;top:211px;width:543px;height:16px;background:#ffffff"></div>
<div class="a" style="left:114px;top:227px;width:649px;height:1px;background:#a0a0a0"></div>
<div class="a" style="left:763px;top:211px;width:37px;height:17px;background:#d8d8d8"></div>
<div class="a" style="left:764px;top:212px;width:18px;height:15px;background:#e8e8e8;border:1px solid #cfcfcf"></div>
<div class="a" style="left:783px;top:212px;width:16px;height:15px;background:#ededed;border:1px solid #cfcfcf"></div>
<div class="t" style="left:770px;top:216.73px;font-size:8px;font-weight:400;color:#555;letter-spacing:0px;">...</div>
<div class="t" style="left:787.5px;top:214.61px;font-size:10.5px;font-weight:400;color:#1a1a1a;letter-spacing:0px;">x</div>
<div class="t" style="left:116px;top:214.53px;font-size:10px;font-weight:400;color:#262626;letter-spacing:-0.12px;">CRM cases</div>
<div class="a" style="left:114px;top:228px;width:69px;height:16px;background:#ffffff"></div>
<div class="a" style="left:183px;top:228px;width:37px;height:16px;background:#9cbe5c;border-left:1px solid #a0a0a0;border-right:1px solid #a0a0a0"></div>
<div class="a" style="left:220px;top:228px;width:543px;height:16px;background:#ffffff"></div>
<div class="a" style="left:114px;top:244px;width:649px;height:1px;background:#a0a0a0"></div>
<div class="a" style="left:763px;top:228px;width:37px;height:17px;background:#d8d8d8"></div>
<div class="a" style="left:764px;top:229px;width:18px;height:15px;background:#e8e8e8;border:1px solid #cfcfcf"></div>
<div class="a" style="left:783px;top:229px;width:16px;height:15px;background:#ededed;border:1px solid #cfcfcf"></div>
<div class="t" style="left:770px;top:233.73px;font-size:8px;font-weight:400;color:#555;letter-spacing:0px;">...</div>
<div class="t" style="left:787.5px;top:231.61px;font-size:10.5px;font-weight:400;color:#1a1a1a;letter-spacing:0px;">x</div>
<div class="t" style="left:116px;top:231.53px;font-size:10px;font-weight:400;color:#262626;letter-spacing:-0.12px;">Contracts</div>
<div class="a" style="left:114px;top:245px;width:69px;height:16px;background:#ffffff"></div>
<div class="a" style="left:183px;top:245px;width:37px;height:16px;background:#f7654a;border-left:1px solid #a0a0a0;border-right:1px solid #a0a0a0"></div>
<div class="a" style="left:220px;top:245px;width:543px;height:16px;background:#ffffff"></div>
<div class="a" style="left:114px;top:261px;width:649px;height:1px;background:#a0a0a0"></div>
<div class="a" style="left:763px;top:245px;width:37px;height:17px;background:#d8d8d8"></div>
<div class="a" style="left:764px;top:246px;width:18px;height:15px;background:#e8e8e8;border:1px solid #cfcfcf"></div>
<div class="a" style="left:783px;top:246px;width:16px;height:15px;background:#ededed;border:1px solid #cfcfcf"></div>
<div class="t" style="left:770px;top:250.73px;font-size:8px;font-weight:400;color:#555;letter-spacing:0px;">...</div>
<div class="t" style="left:787.5px;top:248.61px;font-size:10.5px;font-weight:400;color:#1a1a1a;letter-spacing:0px;">x</div>
<div class="t" style="left:116px;top:248.53px;font-size:10px;font-weight:400;color:#262626;letter-spacing:-0.12px;">Sales activities</div>
<div class="a" style="left:114px;top:262px;width:69px;height:16px;background:#ffffff"></div>
<div class="a" style="left:183px;top:262px;width:37px;height:16px;background:#f4a3a3;border-left:1px solid #a0a0a0;border-right:1px solid #a0a0a0"></div>
<div class="a" style="left:220px;top:262px;width:543px;height:16px;background:#ffffff"></div>
<div class="a" style="left:114px;top:278px;width:649px;height:1px;background:#a0a0a0"></div>
<div class="a" style="left:763px;top:262px;width:37px;height:17px;background:#d8d8d8"></div>
<div class="a" style="left:764px;top:263px;width:18px;height:15px;background:#e8e8e8;border:1px solid #cfcfcf"></div>
<div class="a" style="left:783px;top:263px;width:16px;height:15px;background:#ededed;border:1px solid #cfcfcf"></div>
<div class="t" style="left:770px;top:267.73px;font-size:8px;font-weight:400;color:#555;letter-spacing:0px;">...</div>
<div class="t" style="left:787.5px;top:265.61px;font-size:10.5px;font-weight:400;color:#1a1a1a;letter-spacing:0px;">x</div>
<div class="t" style="left:116px;top:265.54px;font-size:10px;font-weight:400;color:#262626;letter-spacing:-0.12px;">Attendance</div>
<div class="a" style="left:700px;top:424px;width:106px;height:18px;background:linear-gradient(#f0f0f0,#e4e4e4);border:1px solid #b8b8b8"></div>
<div class="t" style="left:570.5px;width:400px;text-align:center;top:428.46px;font-size:9.5px;font-weight:400;color:#262626;letter-spacing:0px;">Cancel</div>
<svg class="a" style="left:806px;top:440px;" width="7" height="7" viewBox="0 0 7 7"><g fill="#bbb"><rect x="5" y="1" width="1" height="1"/><rect x="3" y="3" width="1" height="1"/><rect x="5" y="3" width="1" height="1"/><rect x="1" y="5" width="1" height="1"/><rect x="3" y="5" width="1" height="1"/><rect x="5" y="5" width="1" height="1"/></g></svg>
<div class="a" style="left:437px;top:292px;width:304px;height:265px;background:#4c82c3"></div>
<div class="a" style="left:437px;top:292px;width:304px;height:1px;background:#3f6ba8"></div>
<div class="a" style="left:443px;top:319px;width:291px;height:232px;background:#f0f0f0"></div>
<div class="a" style="left:706px;top:293px;width:29px;height:18px;background:#d9473b"></div>
<svg class="a" style="left:715px;top:297px;" width="11" height="10" viewBox="0 0 11 10"><g stroke="#fff" stroke-width="2"><line x1="1" y1="1" x2="10" y2="9"/><line x1="10" y1="1" x2="1" y2="9"/></g></svg>
<div class="t" style="left:548px;top:300.00px;font-size:13px;font-weight:700;color:#1b2a44;letter-spacing:0px;">Select Folder</div>
<div class="t" style="left:449px;top:326.38px;font-size:9px;font-weight:400;color:#262626;letter-spacing:0px;">Folders:</div>
<div class="a" style="left:449px;top:339px;width:210px;height:206px;background:#fff;border:1px solid #a0a0a0"></div>
<svg class="a" style="left:458px;top:346px;" width="6" height="6" viewBox="0 0 6 6"><path d="M6 0 V6 H0 Z" fill="#555"/></svg>
<div class="a" style="left:468px;top:341px;width:100px;height:15px;background:#cde8f6;border:1px solid #85b3dc"></div>
<svg class="a" style="left:470px;top:342px;" width="13" height="13" viewBox="0 0 13 13"><path d="M1 6.5 L6.5 1.5 L12 6.5 V12.5 H1 Z" fill="#fff" stroke="#777" stroke-width="0.9"/><rect x="5" y="8" width="3" height="4.5" fill="#d9a86a"/><circle cx="3" cy="3" r="2.3" fill="#fff" stroke="#4a7ab8" stroke-width="0.8"/><line x1="9.5" y1="0.5" x2="12" y2="3" stroke="#b04040" stroke-width="1"/></svg>
<div class="t" style="left:488px;top:344.06px;font-size:9.5px;font-weight:700;color:#111;letter-spacing:0px;">Outlook Data File</div>
<svg class="a" style="left:486px;top:356px;" width="14" height="14" viewBox="0 0 14 14"><path d="M0.5 3 H5 L6.5 1.5 H13.5 V11.5 H0.5 Z" fill="#e9c98a"/><rect x="0.5" y="4" width="13" height="7.5" fill="#f0d49a"/></svg>
<div class="t" style="left:504px;top:358.26px;font-size:9.5px;font-weight:700;color:#111;letter-spacing:0px;">Inbox</div>
<svg class="a" style="left:486px;top:370px;" width="14" height="14" viewBox="0 0 14 14"><path d="M0.5 3 H5 L6.5 1.5 H13.5 V11.5 H0.5 Z" fill="#e9c98a"/><rect x="0.5" y="4" width="13" height="7.5" fill="#f0d49a"/><rect x="6" y="5.5" width="8" height="7" fill="#fff" stroke="#4a6fa8" stroke-width="0.8"/><line x1="7.5" y1="11" x2="12.5" y2="6.5" stroke="#3a6ac8" stroke-width="1.5"/></svg>
<div class="t" style="left:504px;top:372.46px;font-size:9.5px;font-weight:700;color:#111;letter-spacing:0px;">Drafts</div>
<svg class="a" style="left:486px;top:385px;" width="14" height="14" viewBox="0 0 14 14"><path d="M0.5 3 H5 L6.5 1.5 H13.5 V11.5 H0.5 Z" fill="#e9c98a"/><rect x="0.5" y="4" width="13" height="7.5" fill="#f0d49a"/><rect x="4" y="5.5" width="9.5" height="7" fill="#fff" stroke="#8a96a8" stroke-width="0.8"/><line x1="6" y1="8.5" x2="11" y2="8.5" stroke="#9aa"/></svg>
<div class="t" style="left:504px;top:386.66px;font-size:9.5px;font-weight:700;color:#111;letter-spacing:0px;">Sent Items</div>
<svg class="a" style="left:486px;top:399px;" width="14" height="14" viewBox="0 0 14 14"><path d="M2 2.5 H11 L10 13 H3 Z" fill="#fff" stroke="#7a8696" stroke-width="0.9"/><line x1="1" y1="2.5" x2="12" y2="2.5" stroke="#7a8696"/><circle cx="6.5" cy="8" r="2" fill="none" stroke="#6a9a8a" stroke-width="0.7"/></svg>
<div class="t" style="left:504px;top:400.86px;font-size:9.5px;font-weight:700;color:#111;letter-spacing:0px;">Deleted Items</div>
<svg class="a" style="left:486px;top:413px;" width="14" height="14" viewBox="0 0 14 14"><rect x="0.5" y="0.5" width="12" height="12" fill="#fff" stroke="#8a8a8a"/><rect x="0.5" y="0.5" width="12" height="2.5" fill="#6a6a6a"/><g stroke="#d8c8a8" stroke-width="0.8"><line x1="1" y1="6" x2="12" y2="6"/><line x1="1" y1="9" x2="12" y2="9"/><line x1="4.5" y1="3" x2="4.5" y2="12"/><line x1="8.5" y1="3" x2="8.5" y2="12"/></g><rect x="5" y="6.5" width="3" height="2.5" fill="#f0c060"/></svg>
<div class="t" style="left:504px;top:415.06px;font-size:9.5px;font-weight:700;color:#111;letter-spacing:0px;">Calendar</div>
<svg class="a" style="left:486px;top:427px;" width="14" height="14" viewBox="0 0 14 14"><rect x="0.5" y="1.5" width="13" height="10" fill="#fff" stroke="#8a96a8"/><circle cx="4.5" cy="5" r="1.6" fill="#3a78c8"/><path d="M2 10 Q2 7 4.5 7 Q7 7 7 10 Z" fill="#3a78c8"/><line x1="8.5" y1="5.5" x2="12" y2="5.5" stroke="#aab"/><line x1="8.5" y1="8" x2="12" y2="8" stroke="#aab"/></svg>
<div class="t" style="left:504px;top:429.26px;font-size:9.5px;font-weight:700;color:#111;letter-spacing:0px;">Contacts</div>
<svg class="a" style="left:486px;top:442px;" width="14" height="14" viewBox="0 0 14 14"><rect x="0.5" y="0.5" width="11" height="12" fill="#fff" stroke="#7a8696"/><rect x="2.5" y="2.5" width="6" height="3" fill="#5a9a7a"/><circle cx="10" cy="11" r="3" fill="#fff" stroke="#3a78c8" stroke-width="0.9"/><path d="M10 9.5 V11 H11.3" fill="none" stroke="#3a78c8" stroke-width="0.7"/></svg>
<div class="t" style="left:504px;top:443.46px;font-size:9.5px;font-weight:700;color:#111;letter-spacing:0px;">Journal</div>
<svg class="a" style="left:486px;top:456px;" width="14" height="14" viewBox="0 0 14 14"><path d="M0.5 0.5 H13.5 V9 L9 13.5 H0.5 Z" fill="#f0d08a"/><path d="M9 13.5 V9 H13.5" fill="#e0b86a"/></svg>
<div class="t" style="left:504px;top:457.66px;font-size:9.5px;font-weight:700;color:#111;letter-spacing:0px;">Notes</div>
<svg class="a" style="left:486px;top:470px;" width="14" height="14" viewBox="0 0 14 14"><path d="M0.5 3 H5 L6.5 1.5 H13.5 V11.5 H0.5 Z" fill="#e9c98a"/><rect x="0.5" y="4" width="13" height="7.5" fill="#f0d49a"/><rect x="4" y="5.5" width="9.5" height="7.5" fill="#fff" stroke="#4a6fa8" stroke-width="0.8"/><path d="M5.5 9.2 H10 M8 7 L10.5 9.2 L8 11.4" fill="none" stroke="#2a68c8" stroke-width="1.2"/></svg>
<div class="t" style="left:504px;top:471.86px;font-size:9.5px;font-weight:700;color:#111;letter-spacing:0px;">Outbox</div>
<svg class="a" style="left:486px;top:484px;" width="14" height="14" viewBox="0 0 14 14"><path d="M0.5 3 H5 L6.5 1.5 H13.5 V11.5 H0.5 Z" fill="#e9c98a"/><rect x="0.5" y="4" width="13" height="7.5" fill="#f0d49a"/><rect x="6" y="6" width="8" height="7.5" fill="#f08a3a"/><circle cx="7.8" cy="11.8" r="0.9" fill="#fff"/><path d="M7.3 9 A3 3 0 0 1 10.5 12.2 M7.3 7.3 A4.8 4.8 0 0 1 12.3 12.2" fill="none" stroke="#fff" stroke-width="0.9"/></svg>
<div class="t" style="left:504px;top:486.06px;font-size:9.5px;font-weight:700;color:#111;letter-spacing:0px;">RSS Feeds</div>
<svg class="a" style="left:486px;top:498px;" width="14" height="14" viewBox="0 0 14 14"><rect x="0.5" y="1.5" width="12" height="12" fill="#fff" stroke="#e0c890" stroke-width="1.4"/><path d="M3 7.5 L5.5 10 L10 4" fill="none" stroke="#d05a4a" stroke-width="1.2"/><rect x="4" y="0" width="5" height="2" fill="#7a7a7a"/></svg>
<div class="t" style="left:504px;top:500.26px;font-size:9.5px;font-weight:700;color:#111;letter-spacing:0px;">Tasks</div>
<div class="a" style="left:667px;top:340px;width:62px;height:19px;background:linear-gradient(#f2f2f2,#e6e6e6);border:1px solid #7aa6d6"></div>
<div class="t" style="left:498.0px;width:400px;text-align:center;top:345.11px;font-size:9.2px;font-weight:400;color:#262626;letter-spacing:-0.1px;">OK</div>
<div class="a" style="left:667px;top:366px;width:62px;height:18px;background:linear-gradient(#f2f2f2,#e6e6e6);border:1px solid #acacac"></div>
<div class="t" style="left:498.0px;width:400px;text-align:center;top:370.91px;font-size:9.2px;font-weight:400;color:#262626;letter-spacing:-0.1px;">Cancel</div>
<div class="a" style="left:667px;top:391px;width:62px;height:19px;background:linear-gradient(#f2f2f2,#e6e6e6);border:1px solid #acacac"></div>
<div class="t" style="left:498.0px;width:400px;text-align:center;top:396.11px;font-size:9.2px;font-weight:400;color:#262626;letter-spacing:-0.1px;">New...</div>
</body></html>
